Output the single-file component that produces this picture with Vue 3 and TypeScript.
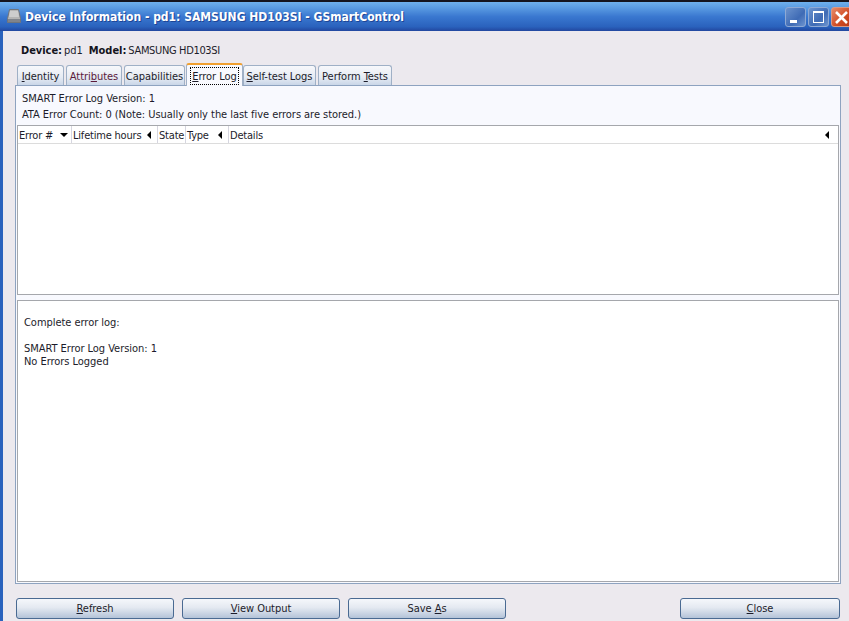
<script setup lang="ts">
interface Tab { pre: string; key: string; post: string; w: number; active?: boolean; red?: boolean }
const tabs: Tab[] = [
  { pre: '', key: 'I', post: 'dentity', w: 47 },
  { pre: 'Attri', key: 'b', post: 'utes', w: 56, red: true },
  { pre: 'Capabilities', key: '', post: '', w: 61 },
  { pre: '', key: 'E', post: 'rror Log', w: 57, active: true },
  { pre: '', key: 'S', post: 'elf-test Logs', w: 73 },
  { pre: 'Perform ', key: 'T', post: 'ests', w: 74 },
]
const cols = [
  { label: 'Error #', w: 54, arrow: 'down' },
  { label: 'Lifetime hours', w: 86, arrow: 'left' },
  { label: 'State', w: 28, arrow: '' },
  { label: 'Type', w: 43, arrow: 'left' },
  { label: 'Details', w: 0, arrow: 'left' },
]
</script>

<template>
  <div class="window">
    <header class="titlebar">
      <svg class="appicon" width="16" height="17" viewBox="0 0 16 17">
        <path d="M3.5 1.5h9l2 9v4h-13v-4z" fill="#b4b4b4" stroke="#6f747c" />
        <path d="M4 3h8l1 6H3z" fill="#cdcdcd" />
        <rect x="2" y="11" width="12" height="3" fill="#80848b" />
      </svg>
      <span class="title">Device Information - pd1: SAMSUNG HD103SI - GSmartControl</span>
      <div class="winbtns">
        <div class="winbtn"><i class="min"></i></div>
        <div class="winbtn"><i class="max"></i></div>
        <div class="winbtn close">
          <svg width="15" height="15" viewBox="0 0 15 15"><path d="M2 2l11 11M13 2L2 13" stroke="#fff" stroke-width="2.6" /></svg>
        </div>
      </div>
    </header>

    <main class="body">
      <div class="devline">
        <b>Device:</b><span class="val">pd1</span><b class="model">Model:</b><span class="val narrow">SAMSUNG HD103SI</span>
      </div>

      <nav class="tabs">
        <div
          v-for="t in tabs"
          :key="t.pre + t.key + t.post"
          class="tab"
          :class="{ active: t.active, red: t.red }"
          :style="{ width: t.w + 'px' }"
        >
          <span class="tablabel">{{ t.pre }}<u v-if="t.key">{{ t.key }}</u>{{ t.post }}</span>
        </div>
      </nav>

      <section class="notebook">
        <div class="info">
          <div>SMART Error Log Version: 1</div>
          <div>ATA Error Count: 0 (Note: Usually only the last five errors are stored.)</div>
        </div>
        <div class="tablebox">
          <div class="thead">
            <div
              v-for="c in cols"
              :key="c.label"
              class="th"
              :class="{ grow: !c.w, first: c.arrow === 'down' }"
              :style="c.w ? { width: c.w + 'px' } : undefined"
            >
              <span>{{ c.label }}</span>
              <i v-if="c.arrow" :class="'arrow-' + c.arrow"></i>
            </div>
          </div>
        </div>
        <div class="logbox">
          <div>Complete error log:</div>
          <div>&nbsp;</div>
          <div>SMART Error Log Version: 1</div>
          <div>No Errors Logged</div>
        </div>
      </section>

      <footer class="actions">
        <button class="btn"><u>R</u>efresh</button>
        <button class="btn"><u>V</u>iew Output</button>
        <button class="btn">Save <u>A</u>s</button>
        <button class="btn closebtn"><u>C</u>lose</button>
      </footer>
    </main>
  </div>
</template>

<style>
html, body { margin: 0; padding: 0; background: #ece9ee; overflow: hidden; }
</style>

<style scoped>
.window {
  width: 849px;
  height: 621px;
  overflow: hidden;
  display: flex;
  flex-direction: column;
  font-family: "DejaVu Sans Condensed", "DejaVu Sans", sans-serif;
  font-size: 11px;
  letter-spacing: -0.04px;
  color: #1c1c2a;
  background: #2a62bd;
  border-top: 2px solid #15151f;
  box-sizing: border-box;
}
.titlebar {
  height: 29px;
  flex: none;
  display: flex;
  align-items: center;
  padding-left: 6px;
  background: linear-gradient(#6fb0ec 0, #5a9be2 20%, #3a78d0 50%, #2a62bd 85%, #22479f 100%);
  color: #fff;
}
.appicon { margin-right: 3px; flex: none; }
.title { font-size: 12px; font-weight: bold; white-space: nowrap; letter-spacing: 0; text-shadow: 1px 1px 0 #1d4596; }
.winbtns { margin-left: auto; display: flex; gap: 2px; margin-right: -3px; align-self: flex-start; margin-top: 5px; }
.winbtn {
  width: 21px;
  height: 20px;
  flex: none;
  box-sizing: border-box;
  border: 1px solid #8ea9d4;
  border-radius: 3px;
  background: linear-gradient(135deg, #6c93cd, #3f6bb5 60%, #6d94cf);
  display: flex;
  align-items: center;
  justify-content: center;
  position: relative;
}
.winbtn.close { background: linear-gradient(135deg, #e88a6a, #cf4a22 60%, #b83a18); border-color: #d99a86; }
.min { width: 7px; height: 3px; background: #fff; position: absolute; left: 4px; bottom: 3px; }
.max { width: 9px; height: 9px; border: 1px solid #fff; border-top-width: 2px; }
.body {
  flex: 1;
  min-height: 0;
  margin-left: 3px;
  background: #ece9ee;
  display: flex;
  flex-direction: column;
  padding-left: 12px;
  padding-right: 8px;
}
.devline {
  height: 33px;
  flex: none;
  display: flex;
  align-items: center;
  padding-left: 6px;
  box-sizing: border-box;
  padding-top: 6px;
  white-space: nowrap;
}
.devline b { font-weight: bold; color: #14141c; }
.devline .val { margin-left: 2px; }
.devline .narrow { letter-spacing: -0.35px; }
.devline .model { margin-left: 6px; }
.tabs { display: flex; height: 21px; flex: none; padding-left: 2px; gap: 2px; align-items: flex-end; position: relative; z-index: 1; }
.tab {
  height: 20px;
  box-sizing: border-box;
  padding-top: 2px;
  border: 1px solid #9fb0c6;
  border-bottom: 0;
  border-radius: 3px 3px 0 0;
  background: linear-gradient(#f7f8fb, #e6ebf3 60%, #c9d6e8);
  display: flex;
  align-items: center;
  justify-content: center;
  white-space: nowrap;
}
.tab.red { color: #5b1a3a; }
.tab.active {
  height: 23px;
  padding-top: 0;
  margin: 0 -2px -1px -1px;
  border-color: #9fb0c6;
  border-top: 2px solid #f0a030;
  background: #f8f9fe;
}
.tab.active .tablabel { outline: 1px dotted #000; padding: 2px 1px 1px; }
.notebook {
  height: 499px;
  flex: none;
  box-sizing: border-box;
  border: 1px solid #8ea3c0;
  background: #f8f9fe;
  padding: 0 1px 1px;
  display: flex;
  flex-direction: column;
}
.info { height: 39px; flex: none; box-sizing: border-box; padding: 5px 0 0 5px; line-height: 16px; display: flex; flex-direction: column; }
.tablebox {
  height: 170px;
  flex: none;
  box-sizing: border-box;
  border: 1px solid #a5a7ac;
  background: #fff;
}
.thead { display: flex; height: 18px; border-bottom: 1px solid #dcdcdc; box-sizing: border-box; letter-spacing: -0.2px; }
.th {
  box-sizing: border-box;
  display: flex;
  align-items: center;
  justify-content: space-between;
  padding: 1px 6px 0 1px;
  border-right: 1px solid #d6d6e0;
  white-space: nowrap;
  flex: none;
}
.th.first { padding-right: 3px; }
.th.grow { flex: 1; border-right: 0; padding-right: 9px; padding-left: 1px; }
.arrow-down { width: 0; height: 0; border-left: 4px solid transparent; border-right: 4px solid transparent; border-top: 4px solid #000; }
.arrow-left { width: 0; height: 0; border-top: 4px solid transparent; border-bottom: 4px solid transparent; border-right: 4px solid #000; }
.logbox {
  margin-top: 5px;
  flex: 1;
  min-height: 0;
  box-sizing: border-box;
  border: 1px solid #a5a7ac;
  background: #fff;
  padding: 15px 6px;
  line-height: 13px;
}
.actions { display: flex; gap: 8px; margin-top: 14px; padding-left: 1px; padding-right: 1px; height: 21px; flex: none; }
.btn {
  width: 158px;
  height: 21px;
  box-sizing: border-box;
  padding: 0;
  border: 1px solid #4a6a92;
  border-radius: 3px;
  background: linear-gradient(#f5f7fb, #e4e9f1 45%, #b4c3d8);
  font: inherit;
  letter-spacing: -0.04px;
  color: #1c1c2a;
}
.closebtn { margin-left: auto; width: 160px; }
</style>
